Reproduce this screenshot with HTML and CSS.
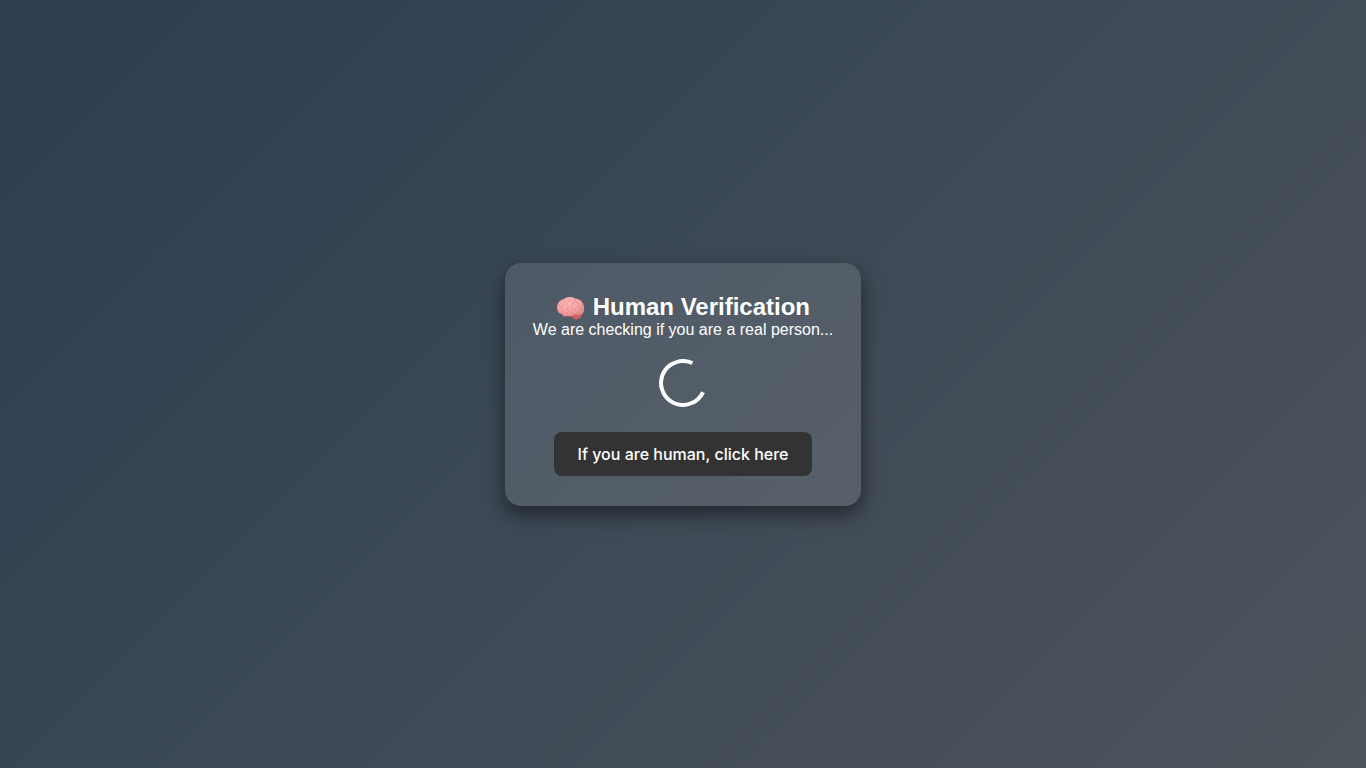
FILE: index.html
```
<!DOCTYPE html>
<html lang="en">
<head>
  <meta charset="utf-8">
  <meta name="viewport" content="width=device-width, initial-scale=1">
  <title>Human Verification</title>
  <link rel="stylesheet" href="styles.css">
</head>
<body>
  <main class="card">
    <h1 class="title"><svg class="brain" viewBox="0 0 30 24" aria-hidden="true">
      <defs>
        <radialGradient id="lobe" cx="40%" cy="30%" r="75%">
          <stop offset="0" stop-color="#fbb6b6"/>
          <stop offset="0.6" stop-color="#f5a2a3"/>
          <stop offset="1" stop-color="#e07f80"/>
        </radialGradient>
      </defs>
      <path fill="#c9605f" d="M16 18c3-1 8-3 10-1 0 4-2 6-6 6.500-3 0-4-3-5-5z"/>
      <path fill="url(#lobe)" d="M1.500 14C0 9 3 4 8 3c3-2.500 8-2.500 11-.5 5 0 9 4 9 9 1 4-1 7-4 7.500-2 .5-4-.5-6-.5-2 2.500-5 2.500-6 1.500-3 1-6 0-6-2-3 0-4-2-4.500-4z"/>
      <g fill="none" stroke="#df8b8c" stroke-width=".7" stroke-linecap="round">
        <path d="M4 12c1-2 3-1 4-3s-1-3 1-4M6 15c2-2 5 0 6-3s-2-3-1-5 3-2 3-4M10 17c1-2 5-1 6-4s-2-3 0-5 3-1 3-4M14 18c2-1 5-1 5-4s4-2 3-5-1-2-1-4M20 17c2-1 4-1 4-4s2-1 1-4M3 9c1 0 2-1 2-2"/>
      </g>
    </svg> Human Verification</h1>
    <p class="message">We are checking if you are a real person...</p>
    <div class="spinner" role="status" aria-label="Checking"></div>
    <button class="confirm" type="button">If you are human, click here</button>
  </main>
</body>
</html>
```
FILE: styles.css
```
* {
  box-sizing: border-box;
  margin: 0;
  padding: 0;
}

body {
  min-height: 100vh;
  display: flex;
  align-items: center;
  justify-content: center;
  background: linear-gradient(135deg, #2c3e50, #4e545c);
  color: #fff;
  font-family: "Liberation Sans", Arial, sans-serif;
}

.card {
  padding: 30px 28px;
  border-radius: 16px;
  background: rgba(255, 255, 255, 0.11);
  box-shadow: 0 8px 20px rgba(0, 0, 0, 0.5);
  text-align: center;
}

.title {
  font-size: 24px;
  font-weight: 700;
  line-height: 28px;
}

.brain {
  width: 30px;
  height: 24px;
  vertical-align: -5px;
}

.message {
  font-size: 16px;
  line-height: 18px;
}

.spinner {
  width: 48px;
  height: 48px;
  margin: 20px auto 25px;
  border: 4px solid #fff;
  border-top-color: transparent;
  border-radius: 50%;
  transform: rotate(70deg);
}

.confirm {
  padding: 12px 24px;
  border: 0;
  border-radius: 8px;
  background: #333;
  color: #fff;
  font: 500 16px/20px Inter, sans-serif;
  cursor: pointer;
}
```
